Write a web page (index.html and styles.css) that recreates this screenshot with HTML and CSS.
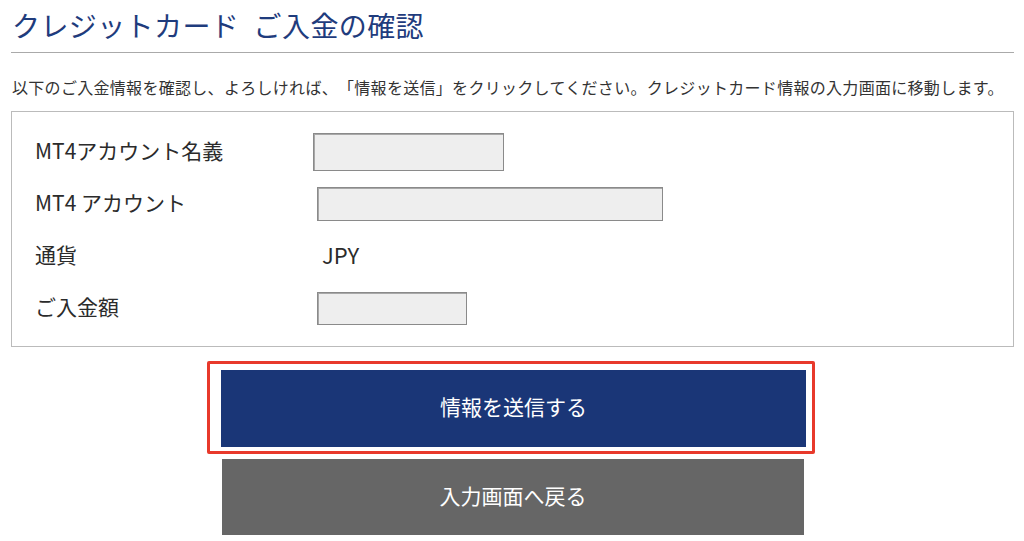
FILE: index.html
```html
<!DOCTYPE html>
<html lang="ja">
<head>
    <meta charset="UTF-8">
    <meta name="viewport" content="width=device-width, initial-scale=1.0">
    <title>クレジットカード ご入金の確認</title>
    <link rel="stylesheet" href="styles.css">
</head>
<body>
    <div class="page">
        <div class="header">
            <h1 class="title">クレジットカード&ensp;ご入金の確認</h1>
        </div>
        <p class="lead">以下のご入金情報を確認し、よろしければ、「情報を送信」をクリックしてください。クレジットカード情報の入力画面に移動します。</p>

        <div class="confirm-box">
            <div class="row">
                <div class="label">MT4アカウント名義</div>
                <div class="value"><div class="field field-name"></div></div>
            </div>
            <div class="row">
                <div class="label">MT4 アカウント</div>
                <div class="value"><div class="field field-account"></div></div>
            </div>
            <div class="row">
                <div class="label">通貨</div>
                <div class="value"><span class="currency">JPY</span></div>
            </div>
            <div class="row">
                <div class="label">ご入金額</div>
                <div class="value"><div class="field field-amount"></div></div>
            </div>
        </div>

        <div class="actions">
            <div class="highlight">
                <button class="btn btn-submit">情報を送信する</button>
            </div>
            <button class="btn btn-back">入力画面へ戻る</button>
        </div>
    </div>
</body>
</html>
```

FILE: styles.css
```css
*{
    margin: 0;
    padding: 0;
    box-sizing: border-box;
}
body {
    background: #fff;
    font-family: "Noto Sans CJK JP", "Noto Sans", sans-serif;
    color: #333;
    text-spacing-trim: space-all;
}
.page {
    padding: 0 10px 0 11px;
}
.header {
    padding: 5px 0 7px 1px;
    border-bottom: 1px solid #aaa;
}
.title {
    font-size: 28px;
    font-weight: normal;
    line-height: 40px;
    letter-spacing: 0.4px;
    color: #1f3c7d;
}
.lead {
    margin-top: 22px;
    padding-left: 1px;
    font-size: 16px;
    line-height: 24px;
    letter-spacing: 0.3px;
    color: #333;
}
.confirm-box {
    margin-top: 12px;
    border: 1px solid #bbb;
    padding: 14px 0 12px 23px;
}
.row {
    display: grid;
    grid-template-columns: 278px 1fr;
    align-items: center;
    height: 52px;
}
.label {
    padding-bottom: 4px;
    font-size: 21px;
    color: #2b2b2b;
}
.value {
    display: flex;
    align-items: center;
}
.field {
    background: #eee;
    border: 1px solid #8a8a8a;
    box-shadow: inset 1px 1px 0 #a8a8a8;
}
.field-name {
    width: 191px;
    height: 38px;
}
.field-account {
    margin-left: 4px;
    width: 346px;
    height: 34px;
}
.field-amount {
    margin-left: 4px;
    width: 150px;
    height: 33px;
}
.currency {
    margin-left: 9px;
    padding-bottom: 4px;
    font-size: 22px;
    color: #2b2b2b;
}
.actions {
    width: 585px;
    margin: 14px 0 0 210px;
}
.highlight {
    margin: 0 -9px 0 -14px;
    padding: 6px 6px 4px 11px;
    border: 3px solid #e8392b;
    border-radius: 2px;
}
.btn {
    display: block;
    border: none;
    color: #fff;
    font-family: "Noto Sans CJK JP", "Noto Sans", sans-serif;
    font-size: 21px;
    line-height: 1.3;
    padding-bottom: 3px;
    cursor: pointer;
}
.btn-submit {
    width: 585px;
    height: 77px;
    background: #1a3677;
}
.btn-back {
    width: 582px;
    height: 76px;
    margin: 5px 0 0 1px;
    background: #666;
}
```
